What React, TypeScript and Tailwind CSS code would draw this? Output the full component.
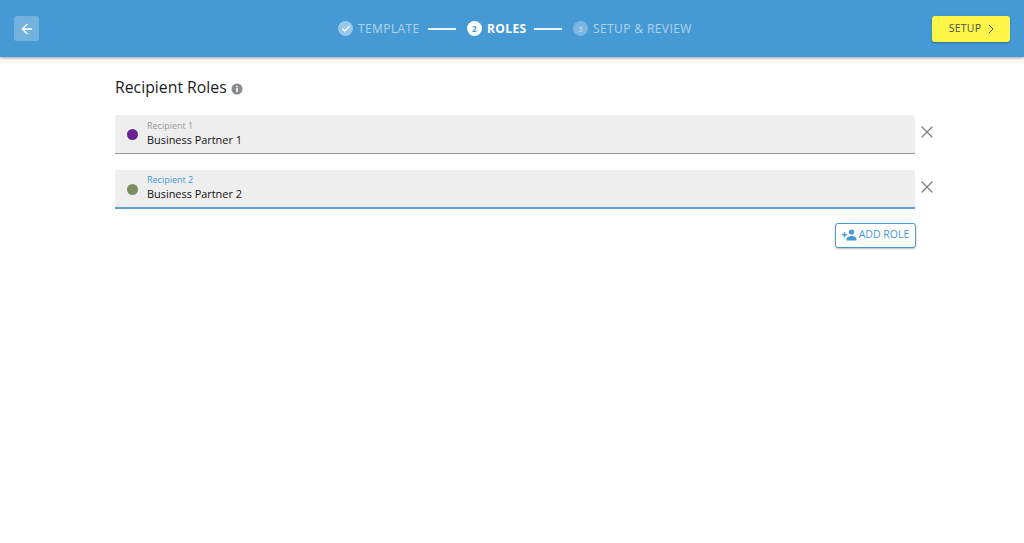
import React from 'react';
import { ArrowLeft, Check, ChevronRight, X } from 'lucide-react';

const roles = [
  { label: 'Recipient 1', value: 'Business Partner 1', dot: 'bg-[#6b2394]', focused: false },
  { label: 'Recipient 2', value: 'Business Partner 2', dot: 'bg-[#7b8f63]', focused: true },
];

const App: React.FC = () => {
  return (
    <div className="min-h-[543px] bg-white font-['Open_Sans',sans-serif]">
      {/* Top bar */}
      <header className="flex h-[57px] items-center bg-[#4599d5] px-[14px] shadow-[0_1px_3px_rgba(0,0,0,0.4)]">
        <button className="flex h-[25px] w-[25px] items-center justify-center rounded-[3px] bg-white/25 text-white">
          <ArrowLeft size={16} strokeWidth={2} />
        </button>

        <div className="ml-[299px] flex items-center text-[12px] tracking-[0.4px]">
          <span className="flex h-[15px] w-[15px] items-center justify-center rounded-full bg-white/45 text-white">
            <Check size={10} strokeWidth={3} />
          </span>
          <span className="ml-[5px] w-[63px] whitespace-nowrap text-white/55">TEMPLATE</span>
          <span className="ml-[7px] h-[2px] w-[28px] bg-white/90" />
          <span className="ml-[11px] flex h-[15px] w-[15px] items-center justify-center rounded-full bg-white text-[8px] font-bold text-[#4599d5]">2</span>
          <span className="ml-[5px] w-[40px] whitespace-nowrap font-bold text-white">ROLES</span>
          <span className="ml-[7px] h-[2px] w-[28px] bg-white/90" />
          <span className="ml-[11px] flex h-[15px] w-[15px] items-center justify-center rounded-full bg-white/30 text-[8px] text-white/60">3</span>
          <span className="ml-[5px] w-[100px] whitespace-nowrap text-white/55">SETUP &amp; REVIEW</span>
        </div>

        <button className="ml-auto flex h-[26px] w-[78px] items-center justify-center gap-[2px] rounded-[3px] bg-[#fff64a] pl-[6px] text-[10.5px] tracking-[0.2px] text-[#4a4f55] shadow-[0_1px_2px_rgba(0,0,0,0.3)]">
          SETUP
          <ChevronRight size={16} strokeWidth={1.5} />
        </button>
      </header>

      {/* Roles */}
      <main className="pl-[115px] pt-[21px]">
        <h1 className="flex h-[19px] items-center gap-[4px] text-[15.8px] leading-[19px] text-[#1c1c1c]">
          Recipient Roles
          <svg width="12" height="12" viewBox="0 0 12 12" className="mt-[2px]">
            <circle cx="6" cy="6" r="5.5" fill="#8a8a8a" />
            <rect x="5.2" y="5" width="1.6" height="4" fill="#fff" />
            <rect x="5.2" y="2.8" width="1.6" height="1.4" fill="#fff" />
          </svg>
        </h1>

        <div className="mt-[18px] flex flex-col gap-[16px]">
          {roles.map((role) => (
            <div key={role.label} className="flex items-center">
              <div
                className={`flex w-[800px] items-center rounded-t-[3px] bg-[#eeeeee] pl-[12px] ${
                  role.focused ? 'h-[39px] border-b-2 border-[#5ba3d9]' : 'h-[38.5px] border-b border-[#999999]'
                }`}
              >
                <span className={`mt-[2px] h-[11px] w-[11px] rounded-full ${role.dot}`} />
                <div className="ml-[9px] mb-[1px] flex flex-col">
                  <span className={`text-[9px] leading-[11px] ${role.focused ? 'text-[#4599d5]' : 'text-[#9a9a9a]'}`}>{role.label}</span>
                  <span className="mt-[2px] text-[10.9px] leading-[14px] text-[#111111]">{role.value}</span>
                </div>
              </div>
              <X size={20} strokeWidth={1.5} className="ml-[2px] mb-[4px] text-[#808080]" />
            </div>
          ))}
        </div>

        <div className="mt-[14px] flex w-[801px] justify-end">
          <button className="flex h-[25px] w-[81px] items-center justify-center gap-[2px] rounded-[3px] border border-[#4599d5] bg-white text-[10.5px] text-[#4599d5] shadow-[0_1px_2px_rgba(0,0,0,0.25)]">
            <svg width="15" height="12" viewBox="0 0 15 12" fill="currentColor">
              <rect x="0" y="5" width="5" height="1.4" />
              <rect x="1.8" y="3.2" width="1.4" height="5" />
              <circle cx="9.5" cy="3" r="2.6" />
              <path d="M4.5 11.5 V10 C4.5 8 7.5 7 9.5 7 C11.5 7 14.5 8 14.5 10 V11.5 Z" />
            </svg>
            ADD ROLE
          </button>
        </div>
      </main>
    </div>
  );
};

export default App;
